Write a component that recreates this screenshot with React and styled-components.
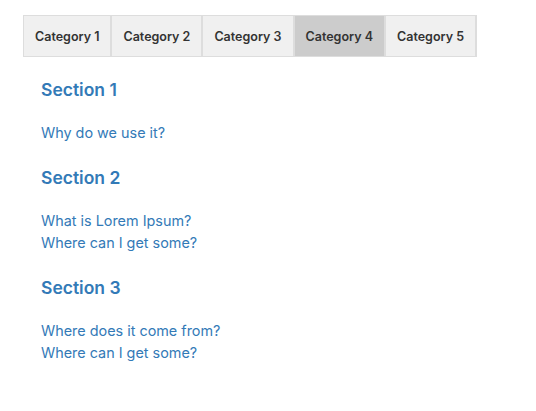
import styled, { createGlobalStyle } from "styled-components";

const GlobalStyle = createGlobalStyle`
	body {
		margin: 0;
		background: #fff;
		font-family: Inter, "Liberation Sans", sans-serif;
	}
`;

const Page = styled.div`
	padding: 15px 23px;
`;

const Tabs = styled.div`
	display: inline-flex;
	border: 1px solid #ddd;
	border-right: none;
`;

const Tab = styled.button`
	font-family: Inter, "Liberation Sans", sans-serif;
	font-size: 12.5px;
	font-weight: 600;
	color: #333;
	height: 40px;
	padding: 0 11px;
	border: none;
	border-right: 2px solid #ddd;
	background: ${(p) => (p.$active ? "#ccc" : "#f0f0f0")};
	cursor: pointer;
`;

const Content = styled.div`
	padding: 21px 18px 0;
`;

const Section = styled.section`
	margin-bottom: 22px;
`;

const Heading = styled.h3`
	margin: 0 0 20px;
	font-size: 17.5px;
	line-height: 24px;
	font-weight: 600;
	color: #337ab7;
`;

const Link = styled.a`
	display: block;
	font-size: 14.4px;
	line-height: 22px;
	color: #337ab7;
	text-decoration: none;
`;

const categories = ["Category 1", "Category 2", "Category 3", "Category 4", "Category 5"];

const sections = [
	{ title: "Section 1", links: ["Why do we use it?"] },
	{ title: "Section 2", links: ["What is Lorem Ipsum?", "Where can I get some?"] },
	{ title: "Section 3", links: ["Where does it come from?", "Where can I get some?"] },
];

const App = () => {
	return (
		<Page>
			<GlobalStyle />
			<Tabs>
				{categories.map((c, i) => (
					<Tab key={c} $active={i === 3}>{c}</Tab>
				))}
			</Tabs>
			<Content>
				{sections.map((s) => (
					<Section key={s.title}>
						<Heading>{s.title}</Heading>
						{s.links.map((l, i) => (
							<Link key={i} href="#">{l}</Link>
						))}
					</Section>
				))}
			</Content>
		</Page>
	);
};

export default App;
